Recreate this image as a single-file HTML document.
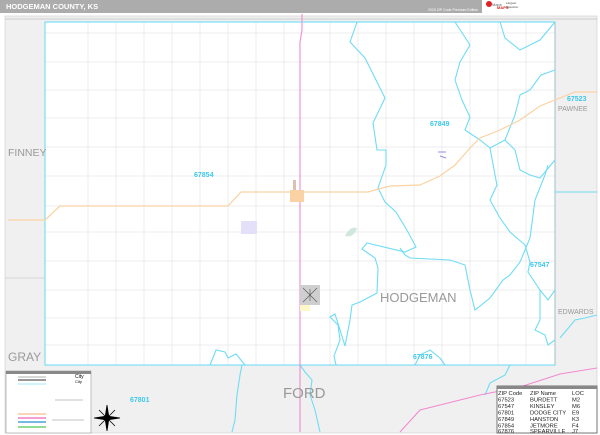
<!DOCTYPE html>
<html><head><meta charset="utf-8"><style>
html,body{margin:0;padding:0;background:#fff;}
svg{display:block;font-family:"Liberation Sans",sans-serif;}
</style></head><body>
<svg width="600" height="435" viewBox="0 0 600 435" xmlns="http://www.w3.org/2000/svg">
<rect width="600" height="435" fill="#fff"/>
<rect x="0" y="0" width="600" height="13" fill="#acacac"/>
<text x="6" y="9" font-size="7.5" font-weight="bold" fill="#fff">HODGEMAN COUNTY, KS</text>
<text x="428" y="11" font-size="3.5" fill="#fff">2020 ZIP Code Premium Edition</text>
<rect x="482" y="0" width="118" height="14" fill="#fff"/>
<circle cx="489" cy="4" r="3" fill="#d22"/>
<text x="492" y="6" font-size="4" fill="#666">Maps</text>
<text x="497" y="9" font-size="4" font-weight="bold" fill="#d22">MAPS</text>
<text x="506" y="4" font-size="3" fill="#444">Largest</text>
<text x="506" y="8" font-size="3" fill="#444">Selection</text>
<rect x="5" y="16" width="592" height="417" fill="#f0f0f0" stroke="#ccc" stroke-width="0.6"/>
<line x1="5" y1="19" x2="597" y2="19" stroke="#aaa" stroke-width="0.5"/>
<rect x="45" y="22" width="510" height="343" fill="#fff"/>
<g stroke="#e6e6e6" stroke-width="0.7">
<line x1="45" y1="33" x2="555" y2="33"/><line x1="45" y1="62" x2="555" y2="62"/>
<line x1="45" y1="90" x2="555" y2="90"/><line x1="45" y1="118" x2="555" y2="118"/>
<line x1="45" y1="147" x2="555" y2="147"/><line x1="45" y1="176" x2="555" y2="176"/>
<line x1="45" y1="206" x2="555" y2="206"/><line x1="45" y1="232" x2="555" y2="232"/>
<line x1="45" y1="261" x2="555" y2="261"/><line x1="45" y1="290" x2="555" y2="290"/>
<line x1="45" y1="318" x2="555" y2="318"/><line x1="45" y1="345" x2="555" y2="345"/>
<line x1="88" y1="22" x2="88" y2="365"/><line x1="116" y1="22" x2="116" y2="365"/>
<line x1="144" y1="22" x2="144" y2="365"/><line x1="172" y1="22" x2="172" y2="365"/>
<line x1="200" y1="22" x2="200" y2="365"/><line x1="228" y1="22" x2="228" y2="365"/>
<line x1="256" y1="22" x2="256" y2="365"/><line x1="284" y1="22" x2="284" y2="365"/>
<line x1="330" y1="22" x2="330" y2="365"/><line x1="358" y1="22" x2="358" y2="365"/>
<line x1="386" y1="22" x2="386" y2="365"/><line x1="414" y1="22" x2="414" y2="365"/>
<line x1="442" y1="22" x2="442" y2="365"/><line x1="470" y1="22" x2="470" y2="365"/>
<line x1="498" y1="22" x2="498" y2="365"/><line x1="526" y1="22" x2="526" y2="365"/>
</g>
<line x1="5" y1="278" x2="45" y2="278" stroke="#bbb" stroke-width="0.6"/>
<line x1="555" y1="192" x2="597" y2="192" stroke="#6fdcf5" stroke-width="0.9"/>
<rect x="45" y="22" width="510" height="343" fill="none" stroke="#6fdcf5" stroke-width="1.1"/>
<line x1="555" y1="22" x2="555" y2="365" stroke="#bbb" stroke-width="0.8"/>
<g fill="none" stroke="#6fdcf5" stroke-width="1.1">
<path d="M357,22 L350,42 L365,58 L385,98 L373,123 L377,150 L386,150 L386,165 L378,188 L385,202 L396,212 L408,232 L416,247 L405,252 L367,243 L362,249 L375,258 L378,268 L377,293 L360,302 L352,305 L350,320 L345,346 L335,314 L330,317 L338,325 L340,340 L334,356 L336,365"/>
<path d="M400,248 L405,255 L410,258 L450,260 L465,265 L470,290 L475,310 L490,298 L503,280 L510,275 L520,262 L530,238 L535,200 L545,175 L548,165"/>
<path d="M455,22 L470,45 L460,62 L455,80 L462,100 L470,117 L465,130 L480,140 L490,148 L505,140 L515,115 L520,95 L530,90 L541,75 L555,70"/>
<path d="M500,22 L505,38 L520,50 L540,40 L555,22"/>
<path d="M490,148 L495,175 L497,185 L490,200 L500,218 L510,232 L525,245 L530,262 L528,272 L540,290 L548,300 L555,290"/>
<path d="M505,140 L515,150 L520,170 L530,175 L540,178 L555,160"/>
<path d="M540,290 L540,320 L535,330 L545,335 L548,345 L555,340"/>
<path d="M210,365 L216,350 L225,352 L228,358 L236,354 L245,365"/>
<path d="M415,365 L420,355 L430,350 L440,358 L445,365"/>
<path d="M560,338 L575,320 L585,318 L597,315"/>
<path d="M242,365 L240,375 L237,395 L235,420 L232,432"/>
<path d="M300,365 L305,372 L312,380 L310,395 L315,410 L320,432"/>
<path d="M485,395 L490,383 L505,375 L510,365"/>
</g>
<path d="M302,14 L302,30 L300,42 L300,432" fill="none" stroke="#f28bd0" stroke-width="1.1"/>
<path d="M400,432 L420,410 L480,395 L520,387 L560,374 L597,368" fill="none" stroke="#f28bd0" stroke-width="1.1"/>
<path d="M8,220 L45,220 L60,206 L228,206 L241,192 L368,192 L390,186 L420,185 L440,176 L455,165 L470,148 L480,138 L500,130 L520,120 L540,106 L575,92 L597,92" fill="none" stroke="#fbd2a3" stroke-width="1.2"/>
<rect x="290" y="190" width="14" height="12" fill="#fbd2a3"/>
<rect x="293" y="180" width="3" height="10" fill="#ddc0b0"/>
<rect x="241" y="221" width="16" height="13" fill="#e5e0fa"/>
<path d="M345,236 Q350,226 357,228 Q354,238 345,236Z" fill="#cfe8dc"/>
<rect x="300" y="285" width="20" height="20" fill="#cfcfcf"/>
<path d="M303,288 L317,302 M317,288 L303,302 M310,289 L310,301" stroke="#555" stroke-width="0.6"/>
<rect x="300" y="305" width="10" height="6" fill="#fdf8c8"/>
<path d="M438,152 L446,152 M440,156 L446,158" stroke="#9a88d6" stroke-width="1"/>
<g fill="#999">
<text x="8" y="156" font-size="10.5">FINNEY</text>
<text x="8" y="361" font-size="12">GRAY</text>
<text x="283" y="398" font-size="15">FORD</text>
<text x="380" y="302" font-size="13">HODGEMAN</text>
<text x="558" y="314" font-size="7">EDWARDS</text>
<text x="558" y="111" font-size="7">PAWNEE</text>
</g>
<g fill="#3ec8ec" font-size="7" font-weight="bold">
<text x="194" y="177">67854</text>
<text x="430" y="126">67849</text>
<text x="530" y="267">67547</text>
<text x="413" y="359">67876</text>
<text x="130" y="402">67801</text>
<text x="567" y="101">67523</text>
</g>
<rect x="6" y="371" width="85" height="62" fill="#fff" stroke="#999" stroke-width="0.6"/>
<rect x="6" y="371" width="85" height="3" fill="#888"/>
<g stroke-width="1.5">
<line x1="18" y1="377" x2="46" y2="377" stroke="#ccc"/>
<line x1="18" y1="380" x2="46" y2="380" stroke="#777"/>
<line x1="18" y1="384" x2="46" y2="384" stroke="#bff0fa"/>
<line x1="18" y1="414" x2="46" y2="414" stroke="#f5c8a0"/>
<line x1="18" y1="418" x2="46" y2="418" stroke="#f080c8"/>
<line x1="18" y1="422" x2="46" y2="422" stroke="#4aa0e0"/>
<line x1="18" y1="427" x2="46" y2="427" stroke="#70d070"/>
</g>
<g stroke="#888" stroke-width="0.5">
<line x1="55" y1="400" x2="83" y2="400"/><line x1="52" y1="420" x2="84" y2="420"/>
</g>
<text x="75" y="378" font-size="5">City</text>
<text x="75" y="383" font-size="4">City</text>
<g stroke="#000" stroke-width="0.8" fill="#000">
<path d="M107,405 L109,418 L107,431 L105,418Z"/>
<path d="M94,418 L107,416 L120,418 L107,420Z"/>
<path d="M99,410 L115,426 M115,410 L99,426"/>
</g>
<rect x="497" y="386" width="100" height="47" fill="#fff" stroke="#555" stroke-width="0.8"/>
<rect x="497" y="386" width="100" height="3" fill="#888"/>
<g font-size="5.8" fill="#222">
<text x="498" y="395">ZIP Code</text><text x="530" y="395">ZIP Name</text><text x="572" y="395">LOC</text>
<text x="498" y="401.5">67523</text><text x="530" y="401.5">BURDETT</text><text x="572" y="401.5">M2</text>
<text x="498" y="408">67547</text><text x="530" y="408">KINSLEY</text><text x="572" y="408">M6</text>
<text x="498" y="414.5">67801</text><text x="530" y="414.5">DODGE CITY</text><text x="572" y="414.5">E9</text>
<text x="498" y="421">67849</text><text x="530" y="421">HANSTON</text><text x="572" y="421">K3</text>
<text x="498" y="427.5">67854</text><text x="530" y="427.5">JETMORE</text><text x="572" y="427.5">F4</text>
<text x="498" y="433">67876</text><text x="530" y="433">SPEARVILLE</text><text x="572" y="433">J7</text>
</g>
</svg>
</body></html>
